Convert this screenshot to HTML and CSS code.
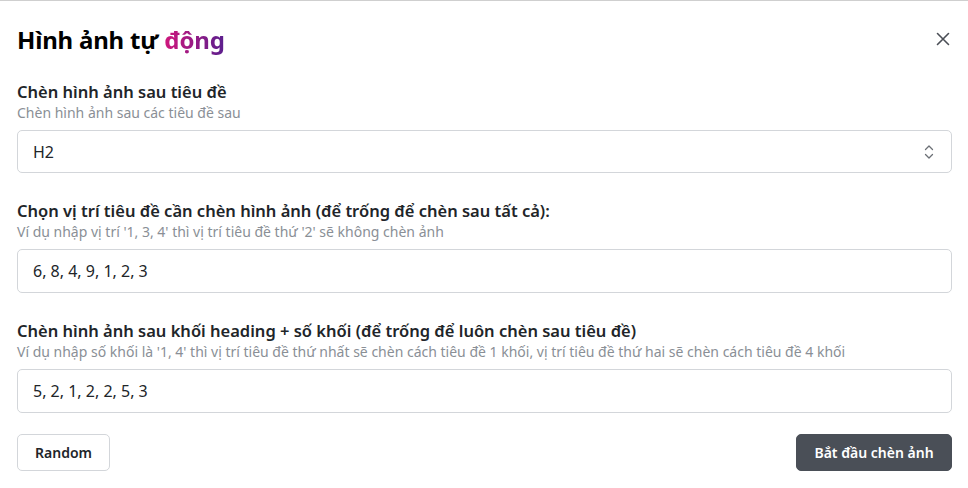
FILE: index.html
```html
<!DOCTYPE html>
<html lang="vi">
<head>
<meta charset="utf-8">
<title>Hình ảnh tự động</title>
<link rel="stylesheet" href="styles.css">
</head>
<body>
<div class="dialog">
  <div class="header">
    <h1 class="title">Hình ảnh tự <span class="grad">động</span></h1>
    <button class="close" aria-label="Đóng">
      <svg width="14" height="14" viewBox="0 0 14 14"><path d="M1.5 1.5 L12.5 12.5 M12.5 1.5 L1.5 12.5" stroke="#4b4f56" stroke-width="1.6" fill="none" stroke-linecap="round"/></svg>
    </button>
  </div>

  <div class="fields">
    <div class="field">
      <div class="label">Chèn hình ảnh sau tiêu đề</div>
      <div class="hint">Chèn hình ảnh sau các tiêu đề sau</div>
      <div class="select">
        <span>H2</span>
        <svg class="chev" width="10" height="16" viewBox="0 0 10 16"><path d="M1.5 5.5 L5 2 L8.5 5.5 M1.5 10.5 L5 14 L8.5 10.5" stroke="#6b6f75" stroke-width="1.3" fill="none" stroke-linecap="round" stroke-linejoin="round"/></svg>
      </div>
    </div>

    <div class="field">
      <div class="label">Chọn vị trí tiêu đề cần chèn hình ảnh (để trống để chèn sau tất cả):</div>
      <div class="hint">Ví dụ nhập vị trí '1, 3, 4' thì vị trí tiêu đề thứ '2' sẽ không chèn ảnh</div>
      <div class="input">6, 8, 4, 9, 1, 2, 3</div>
    </div>

    <div class="field">
      <div class="label">Chèn hình ảnh sau khối heading + số khối (để trống để luôn chèn sau tiêu đề)</div>
      <div class="hint">Ví dụ nhập số khối là '1, 4' thì vị trí tiêu đề thứ nhất sẽ chèn cách tiêu đề 1 khối, vị trí tiêu đề thứ hai sẽ chèn cách tiêu đề 4 khối</div>
      <div class="input">5, 2, 1, 2, 2, 5, 3</div>
    </div>
  </div>

  <div class="actions">
    <button class="btn btn-light">Random</button>
    <button class="btn btn-dark">Bắt đầu chèn ảnh</button>
  </div>
</div>
</body>
</html>
```

FILE: styles.css
```css
* { box-sizing: border-box; }
html, body { margin: 0; padding: 0; background: #fff; }
body {
  font-family: "Noto Sans", "Open Sans", sans-serif;
  color: #212529;
}
.dialog {
  border-top: 1px solid #cfcfcf;
  padding: 0 16px 0 17px;
  height: 488px;
}
.header {
  display: flex;
  align-items: center;
  justify-content: space-between;
  height: 80px;
  padding-bottom: 4px;
}
.title {
  margin: 0;
  font-size: 24px;
  font-weight: 700;
  color: #000;
  letter-spacing: -0.2px;
}
.grad {
  background: linear-gradient(90deg, #d0177c 0%, #5a1f8e 100%);
  -webkit-background-clip: text;
  background-clip: text;
  color: transparent;
}
.close {
  border: 0;
  background: none;
  padding: 0;
  margin-right: 2px;
  width: 14px;
  height: 14px;
  display: flex;
  cursor: pointer;
}
.fields {
  display: flex;
  flex-direction: column;
  gap: 27px;
  margin-bottom: 21px;
}
.label {
  font-size: 16.5px;
  font-weight: 600;
  line-height: 22px;
  color: #212529;
}
.hint {
  font-size: 14px;
  line-height: 20px;
  color: #8a8f96;
  margin-bottom: 7px;
}
.select, .input {
  height: 44px;
  border: 1px solid #d3d6da;
  border-radius: 5px;
  padding: 0 15px;
  font-size: 16px;
  display: flex;
  align-items: center;
  color: #212529;
}
.select { justify-content: space-between; height: 43px; }
.chev { margin-right: 2px; }
.actions {
  display: flex;
  justify-content: space-between;
}
.btn {
  height: 37px;
  border-radius: 5px;
  font-family: inherit;
  font-size: 14px;
  font-weight: 600;
  padding: 0 17px;
  cursor: pointer;
}
.btn-light {
  background: #fff;
  border: 1px solid #d3d6da;
  color: #212529;
  width: 93px;
}
.btn-dark {
  background: #4a4f57;
  border: 1px solid #4a4f57;
  color: #fff;
  width: 156px;
}
```
